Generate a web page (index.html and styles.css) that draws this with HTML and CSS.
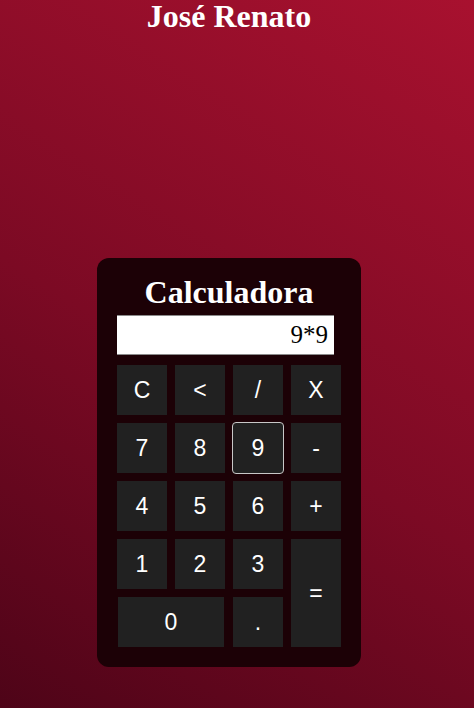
FILE: index.html
```html
<!DOCTYPE html>
<html lang="pt">
<head>
<meta charset="utf-8">
<title>Calculadora</title>
<link rel="stylesheet" href="styles.css">
</head>
<body>
<div class="page">
  <h1 class="name">José Renato</h1>
  <div class="calc">
    <h1 class="calc-title">Calculadora</h1>
    <div class="display">9*9</div>
    <div class="keys">
      <button class="key">C</button>
      <button class="key">&lt;</button>
      <button class="key">/</button>
      <button class="key">X</button>
      <button class="key">7</button>
      <button class="key">8</button>
      <button class="key focused">9</button>
      <button class="key">-</button>
      <button class="key">4</button>
      <button class="key">5</button>
      <button class="key">6</button>
      <button class="key">+</button>
      <button class="key">1</button>
      <button class="key">2</button>
      <button class="key">3</button>
      <button class="key equals">=</button>
      <button class="key zero">0</button>
      <button class="key">.</button>
    </div>
  </div>
</div>
</body>
</html>
```
FILE: styles.css
```css
html, body {
  margin: 0;
  padding: 0;
  height: 100%;
}
body {
  background: linear-gradient(212deg, #a8112f 0%, #7c0a24 55%, #4e0418 100%);
  font-family: "Liberation Serif", "Times New Roman", serif;
  color: #fff;
}
.page {
  display: flex;
  flex-direction: column;
  align-items: center;
  padding-right: 16px;
}
.name {
  margin: 0;
  font-size: 32px;
  line-height: 1;
  font-weight: bold;
}
.calc {
  margin-top: 226px;
  width: 224px;
  padding: 16px 20px 20px;
  background: #1c0106;
  border-radius: 12px;
  display: flex;
  flex-direction: column;
}
.calc-title {
  margin: 0 0 4px;
  font-size: 32px;
  font-weight: bold;
  text-align: center;
  line-height: 37px;
}
.display {
  box-sizing: border-box;
  width: 217px;
  height: 40px;
  background: #fff;
  color: #000;
  border-top: 1px solid #8a8a8a;
  border-bottom: 1px solid #8a8a8a;
  text-align: right;
  font-size: 25px;
  line-height: 38px;
  padding-right: 6px;
}
.keys {
  margin-top: 10px;
  display: grid;
  grid-template-columns: repeat(4, 50px);
  grid-auto-rows: 50px;
  gap: 8px;
}
.key {
  box-sizing: border-box;
  background: #212121;
  color: #fff;
  border: none;
  border-radius: 0;
  padding: 0;
  font-family: "Liberation Sans", Arial, sans-serif;
  font-size: 23px;
}
.key.focused {
  border: 1px solid #c8c8c8;
  border-radius: 4px;
  margin: -1px;
}
.key.equals {
  grid-column: 4;
  grid-row: 4 / span 2;
}
.key.zero {
  grid-column: 1 / span 2;
  margin: 0 1px;
}
```
